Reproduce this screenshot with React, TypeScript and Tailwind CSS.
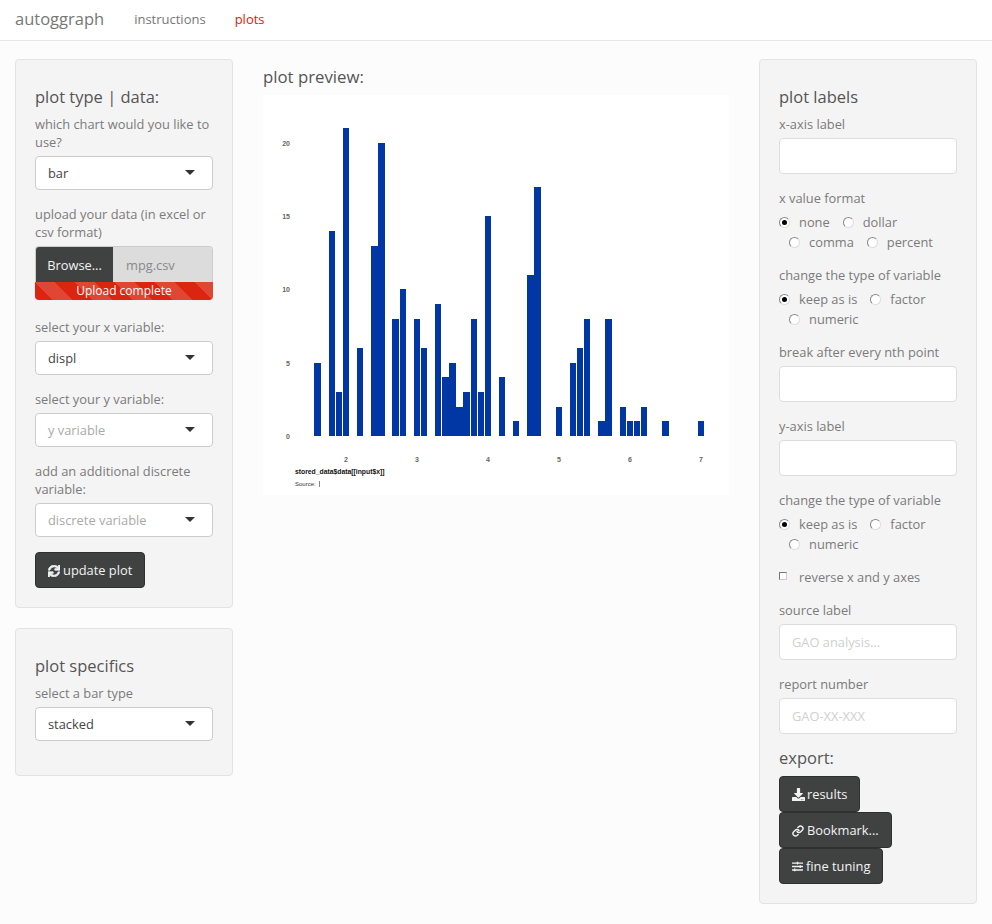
import React from 'react'
import { FaDownload, FaSlidersH, FaSync } from 'react-icons/fa'
import { Link } from 'lucide-react'

// [x, width, value] read off the preview
const bars: [number, number, number][] = [
  [314, 7, 5], [329, 6, 14], [336, 6, 3], [343, 6, 21], [357, 6, 6],
  [371, 7, 13], [378, 7, 20], [392, 7, 8], [400, 6, 10], [414, 6, 8],
  [421, 6, 6], [435, 6, 9], [442, 7, 4], [449, 7, 5], [456, 7, 2],
  [463, 7, 3], [471, 6, 8], [478, 6, 3], [485, 6, 15], [499, 6, 4],
  [513, 6, 1], [527, 7, 11], [534, 7, 17], [556, 6, 2], [570, 6, 5],
  [577, 6, 6], [584, 6, 8], [598, 7, 1], [605, 7, 8], [620, 6, 2],
  [627, 6, 1], [634, 6, 1], [641, 6, 2], [662, 7, 1], [698, 6, 1],
]

// pixel top of a bar for each count, the scale rounds unevenly in the picture
const barTop: Record<number, number> = {
  1: 421, 2: 407, 3: 392, 4: 377, 5: 363, 6: 348, 8: 319, 9: 304, 10: 289,
  11: 275, 13: 246, 14: 231, 15: 216, 17: 187, 20: 143, 21: 128,
}

function Label({ children }: { children: React.ReactNode }) {
  return <div className="mb-[5px] text-[12.85px] leading-[18px] text-[#7b7b7b]">{children}</div>
}

function Heading({ children }: { children: React.ReactNode }) {
  return <h3 className="text-[16.5px] leading-[18px] text-[#555]">{children}</h3>
}

function SelectBox({ value, placeholder }: { value?: string; placeholder?: string }) {
  return (
    <div className="relative h-[34px] rounded border border-[#ccc] bg-white pl-[12px] text-[12.85px] leading-[32px]">
      <span className={value ? 'text-[#444]' : 'text-[#aaa]'}>{value ?? placeholder}</span>
      <span className="absolute right-[17px] top-[13px] h-0 w-0 border-x-[5px] border-t-[5px] border-x-transparent border-t-[#333]" />
    </div>
  )
}

function TextBox({ placeholder }: { placeholder?: string }) {
  return (
    <input
      placeholder={placeholder}
      className="block h-[36px] w-full rounded border border-[#ddd] bg-white px-[12px] text-[12.85px] text-[#444] placeholder:text-[#d0d0d0]"
    />
  )
}

function Radio({ label, checked }: { label: string; checked?: boolean }) {
  return (
    <span className="flex items-center text-[12.85px] leading-[20px] text-[#7b7b7b]">
      <span className="mr-[9px] flex h-[11px] w-[11px] items-center justify-center rounded-full border border-[#888] border-r-[#ddd] border-b-[#ddd] bg-white">
        {checked && <span className="h-[5px] w-[5px] rounded-full bg-black" />}
      </span>
      {label}
    </span>
  )
}

function RadioGroup({ first, second }: { first: [string, string]; second: string[] }) {
  return (
    <div className="mt-[5px]">
      <div className="flex gap-[13px]">
        <Radio label={first[0]} checked />
        <Radio label={first[1]} />
      </div>
      <div className="flex gap-[13px] pl-[10px]">
        {second.map((s) => (
          <Radio key={s} label={s} />
        ))}
      </div>
    </div>
  )
}

function DarkButton({ icon, children }: { icon: React.ReactNode; children: React.ReactNode }) {
  return (
    <button className="flex h-[36px] w-fit items-center gap-[3px] rounded border border-[#2f3131] bg-[#404242] px-[12px] pt-[1px] text-[12.85px] text-[#f2f2f2]">
      {icon}
      {children}
    </button>
  )
}

function Chart() {
  return (
    <svg width="466" height="400" viewBox="263 95 466 400" className="block bg-white">
      {bars.map(([x, w, v]) => (
        <rect key={x} x={x} y={barTop[v]} width={w} height={436 - barTop[v]} fill="#0037a5" />
      ))}
      <g fontFamily="'Liberation Sans', sans-serif" fontSize="7" fontWeight="700" fill="#666">
        {[[20, 146], [15, 219], [10, 292], [5, 365.5], [0, 439]].map(([v, y]) => (
          <text key={v} x="290" y={y} textAnchor="end">{v}</text>
        ))}
        {[2, 3, 4, 5, 6, 7].map((v, i) => (
          <text key={v} x={346 + i * 71} y="462" textAnchor="middle">{v}</text>
        ))}
      </g>
      <g fontFamily="'Liberation Sans', sans-serif">
        <text x="295" y="474" fontSize="6.8" fontWeight="700" fill="#111">
          stored_data$data[[input$x]]
        </text>
        <text x="295" y="486" fontSize="6" fill="#333">
          Source:
        </text>
      </g>
      <rect x="319" y="481" width="0.7" height="6" fill="#555" />
    </svg>
  )
}

export default function App() {
  return (
    <div className="min-h-[924px] bg-[#fcfcfc] font-['Open_Sans',sans-serif]">
      <nav className="flex h-[41px] items-center border-b border-[#e7e7e7] bg-white pl-[15px] pb-px">
        <span className="mr-[30px] text-[16.5px] text-[#777]">autoggraph</span>
        <span className="mr-[29px] text-[13px] text-[#777]">instructions</span>
        <span className="text-[13px] text-[#e0200c]">plots</span>
      </nav>

      <div className="flex gap-[30px] px-[15px] pt-[18px]">
        {/* left column */}
        <div className="w-[218px] shrink-0">
          <section className="h-[549px] rounded border border-[#e3e3e3] bg-[#f4f4f4] px-[19px] pt-[28px]">
            <Heading>plot type | data:</Heading>
            <div className="mt-[9px]">
              <Label>which chart would you like to use?</Label>
              <SelectBox value="bar" />
            </div>
            <div className="mt-[15px]">
              <Label>upload your data (in excel or csv format)</Label>
              <div className="flex h-[36px] overflow-hidden rounded-t border border-[#ccc] border-b-0 text-[12.85px] leading-[36px]">
                <span className="w-[77px] bg-[#404242] text-center text-[#f2f2f2]">Browse...</span>
                <span className="flex-1 bg-[#dcdcdc] pl-[13px] text-[#888]">mpg.csv</span>
              </div>
              <div className="h-[18px] rounded-b bg-[#dc2510] bg-[linear-gradient(45deg,rgba(255,255,255,0.15)_25%,transparent_25%,transparent_50%,rgba(255,255,255,0.15)_50%,rgba(255,255,255,0.15)_75%,transparent_75%,transparent)] bg-[length:40px_40px] text-center text-[12px] leading-[18px] text-white">
                Upload complete
              </div>
            </div>
            <div className="mt-[18px]">
              <Label>select your x variable:</Label>
              <SelectBox value="displ" />
            </div>
            <div className="mt-[15px]">
              <Label>select your y variable:</Label>
              <SelectBox placeholder="y variable" />
            </div>
            <div className="mt-[15px]">
              <Label>add an additional discrete variable:</Label>
              <SelectBox placeholder="discrete variable" />
            </div>
            <div className="mt-[15px]">
              <DarkButton icon={<FaSync className="h-[12px] w-[12px]" stroke="currentColor" strokeWidth={30} />}>update plot</DarkButton>
            </div>
          </section>

          <section className="mt-[20px] h-[148px] rounded border border-[#e3e3e3] bg-[#f4f4f4] px-[19px] pt-[28px]">
            <Heading>plot specifics</Heading>
            <div className="mt-[9px]">
              <Label>select a bar type</Label>
              <SelectBox value="stacked" />
            </div>
          </section>
        </div>

        {/* plot preview */}
        <div className="w-[466px] shrink-0">
          <h3 className="mb-[9px] pt-[9px] text-[16.8px] leading-[18px] text-[#555]">plot preview:</h3>
          <Chart />
        </div>

        {/* right column */}
        <section className="h-[845px] w-[218px] shrink-0 rounded border border-[#e3e3e3] bg-[#f4f4f4] px-[19px] pt-[28px]">
          <Heading>plot labels</Heading>
          <div className="mt-[9px]">
            <Label>x-axis label</Label>
            <TextBox />
          </div>
          <div className="mt-[15px]">
            <div className="text-[12.85px] leading-[18px] text-[#7b7b7b]">x value format</div>
            <RadioGroup first={['none', 'dollar']} second={['comma', 'percent']} />
          </div>
          <div className="mt-[14px]">
            <div className="text-[12.85px] leading-[18px] text-[#7b7b7b]">change the type of variable</div>
            <RadioGroup first={['keep as is', 'factor']} second={['numeric']} />
          </div>
          <div className="mt-[14px]">
            <Label>break after every nth point</Label>
            <TextBox />
          </div>
          <div className="mt-[15px]">
            <Label>y-axis label</Label>
            <TextBox />
          </div>
          <div className="mt-[15px]">
            <div className="text-[12.85px] leading-[18px] text-[#7b7b7b]">change the type of variable</div>
            <RadioGroup first={['keep as is', 'factor']} second={['numeric']} />
          </div>
          <div className="mt-[14px] flex items-center text-[12.85px] leading-[18px] text-[#7b7b7b]">
            <span className="mb-[3px] mr-[12px] h-[8px] w-[8px] border border-[#777] border-r-[#ccc] border-b-[#ccc] bg-white" />
            reverse x and y axes
          </div>
          <div className="mt-[15px]">
            <Label>source label</Label>
            <TextBox placeholder="GAO analysis..." />
          </div>
          <div className="mt-[15px]">
            <Label>report number</Label>
            <TextBox placeholder="GAO-XX-XXX" />
          </div>
          <div className="mt-[15px]">
            <Heading>export:</Heading>
          </div>
          <div className="mt-[9px] flex flex-col">
            <DarkButton icon={<FaDownload className="-mr-px h-[13px] w-[13px]" />}>results</DarkButton>
            <DarkButton icon={<Link size={12} strokeWidth={2.8} />}>Bookmark...</DarkButton>
            <DarkButton icon={<FaSlidersH className="h-[11px] w-[11px]" />}>fine tuning</DarkButton>
          </div>
        </section>
      </div>
    </div>
  )
}
